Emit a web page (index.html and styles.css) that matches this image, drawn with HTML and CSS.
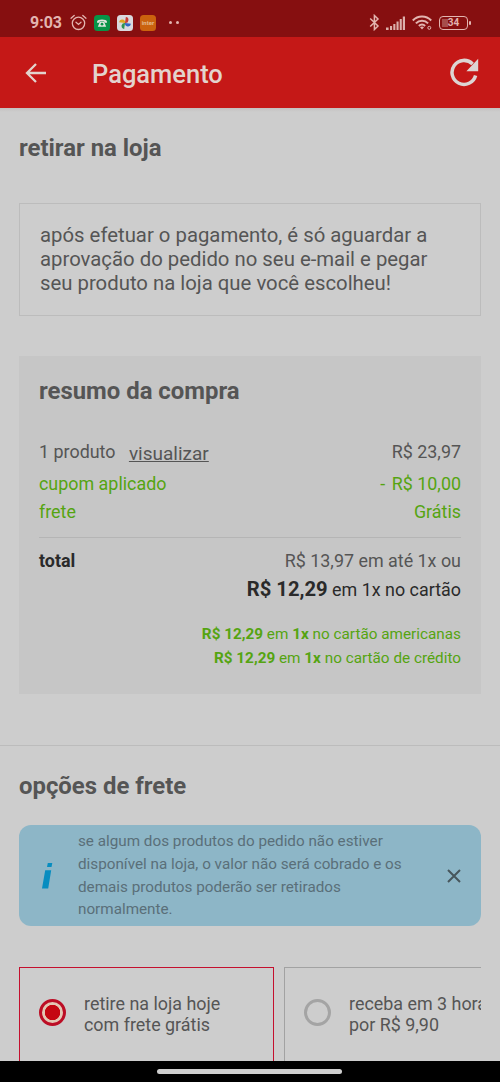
FILE: index.html
```
<!DOCTYPE html>
<html lang="pt-BR">
<head>
<meta charset="utf-8">
<title>Pagamento</title>
<link rel="stylesheet" href="styles.css">
</head>
<body>
<div class="screen">
  <div class="statusbar">
    <span class="clock">9:03</span>
    <svg class="alarm" width="17" height="17" viewBox="0 0 17 17" fill="none" stroke="#e3b5b0" stroke-width="1.3" stroke-linecap="round"><circle cx="8.5" cy="9.3" r="6.2"/><path d="M1 4.2 4.2 1.5M16 4.2 12.8 1.5M6 8.3l2.5 2.2L11 8.3"/></svg>
    <svg class="app" width="16" height="16" viewBox="0 0 16 16"><rect width="16" height="16" rx="3.5" fill="#079447"/><path d="M3 6.8C3 3.7 13 3.7 13 6.8L12.6 8 10.3 7.6V6.4H5.7v1.2L3.4 8z" fill="#dfe6df"/><path d="M5.8 7h4.4l2 4.7H3.8z" fill="#dfe6df"/><circle cx="8" cy="9.2" r="1.4" fill="#079447"/></svg>
    <svg class="app" width="16" height="16" viewBox="0 0 16 16"><rect width="16" height="16" rx="3.5" fill="#d9d9de"/><path d="M8 8V2a3 3 0 0 1 0 6z" fill="#c83c32" transform="rotate(8 8 8)"/><path d="M8 8h6A3 3 0 0 1 8 8z" fill="#2f66c4" transform="rotate(8 8 8)"/><path d="M8 8v6A3 3 0 0 1 8 8z" fill="#2d9250" transform="rotate(8 8 8)"/><path d="M8 8H2A3 3 0 0 1 8 8z" fill="#dfa51d" transform="rotate(8 8 8)"/></svg>
    <span class="inter">inter</span>
    <span class="dots"><i></i><i></i></span>
    <svg class="bluetooth" width="11" height="17" viewBox="0 0 11 17" fill="none" stroke="#e3b5b0" stroke-width="1.5"><path d="M1.2 4.5 9 12l-3.6 3.5V1.5L9 5l-7.8 7.5"/></svg>
    <svg class="signal" width="19" height="14" viewBox="0 0 19 14" fill="#dcb0ab"><path d="M0 11.5h2.6V14H0zM4 10h2.1v4H4zM7.3 8h2.1v6H7.3zM10.5 5.6h2.1V14h-2.1zM13.7 3h2.1v11h-2.1zM16.8 0.5H19V14h-2.2z"/></svg>
    <svg class="wifi" width="20" height="15" viewBox="0 0 20 15" fill="none" stroke="#e3b5b0" stroke-width="2"><path d="M.8 5.5C5.8.2 14.2.2 19.2 5.5M3.9 8.4c3.3-3.6 8.9-3.6 12.2 0M6.9 11c1.8-1.9 4.4-1.9 6.2 0"/><path d="M8 12.3Q10 10.5 12 12.3L10 14.6z" fill="#e3b5b0" stroke="none"/><circle cx="17.3" cy="12.8" r="1.5" stroke-width="1"/></svg>
    <span class="battery"><b>34</b></span>
  </div>
  <header class="appbar">
    <svg class="back" width="22" height="20" viewBox="0 0 22 20" fill="none" stroke="#e3d3cd" stroke-width="2.3"><path d="M21 10H2M11 1 2 10l9 9"/></svg>
    <h1>Pagamento</h1>
    <svg class="reload" width="29" height="29" viewBox="0 0 29 29"><path d="M25.6 17.5A12 12 0 1 1 22.6 6" fill="none" stroke="#ddd5d3" stroke-width="3.5"/><path d="M28.2.8v12.5H16.4z" fill="#ddd5d3"/></svg>
  </header>
  <main class="content">
    <section class="pickup">
      <h2>retirar na loja</h2>
      <p class="notice">após efetuar o pagamento, é só aguardar a<br>aprovação do pedido no seu e-mail e pegar<br>seu produto na loja que você escolheu!</p>
      <div class="summary">
        <h2>resumo da compra</h2>
        <div class="row products"><span>1 produto <a>visualizar</a></span><span>R$ 23,97</span></div>
        <div class="row coupon"><span>cupom aplicado</span><span><span class="minus">-</span> R$ 10,00</span></div>
        <div class="row freight"><span>frete</span><span>Grátis</span></div>
        <div class="row total"><strong>total</strong><span>R$ 13,97 em até 1x ou</span></div>
        <div class="cash"><strong>R$ 12,29</strong> em 1x no cartão</div>
        <div class="offers">
          <div><b>R$ 12,29</b> em <b>1x</b> no cartão americanas</div>
          <div><b>R$ 12,29</b> em <b>1x</b> no cartão de crédito</div>
        </div>
      </div>
    </section>
    <section class="shipping">
      <h2>opções de frete</h2>
      <div class="info">
        <svg class="info-icon" width="11" height="26" viewBox="0 0 11 26" fill="#078dc0"><path d="M5.8 0h4.5l-.8 4.1H5zM3.2 7.3h6L6.2 25.5H0z"/></svg>
        <p>se algum dos produtos do pedido não estiver<br>disponível na loja, o valor não será cobrado e os<br>demais produtos poderão ser retirados<br>normalmente.</p>
        <svg class="close" width="14" height="14" viewBox="0 0 14 14" stroke="#47565c" stroke-width="2"><path d="M1 1l12 12M13 1 1 13"/></svg>
      </div>
      <div class="options">
        <div class="option selected"><span class="radio"></span><span>retire na loja hoje<br>com frete grátis</span></div>
        <div class="option"><span class="radio"></span><span>receba em 3 horas<br>por R$ 9,90</span></div>
      </div>
    </section>
  </main>
  <div class="navbar"><span></span></div>
</div>
</body>
</html>
```
FILE: styles.css
```
* { box-sizing: border-box; }
body { margin: 0; background: #cdcdcd; font-family: Roboto, sans-serif; color: #555; }
h1, h2, p { margin: 0; }
.screen { width: 500px; height: 1082px; display: flex; flex-direction: column; overflow: hidden; }
.statusbar { flex: 0 0 37px; display: flex; align-items: center; padding: 8px 29px 0 30px; background: #860f10; color: #e3b5b0; }
.clock { width: 40px; font-size: 16px; font-weight: 700; line-height: 18px; }
.app { margin-left: 7px; }
.inter { width: 16px; height: 16px; margin-left: 7px; border-radius: 3.5px; background: #cb620e; color: #e2b98c; font-size: 6px; font-weight: 700; line-height: 15px; text-align: center; }
.dots { display: flex; gap: 4px; margin-left: 13px; }
.dots i { width: 3px; height: 3px; border-radius: 50%; background: #e3b5b0; }
.bluetooth { margin-left: auto; }
.signal { margin-left: 6px; }
.wifi { margin-left: 7px; }
.battery { position: relative; width: 29px; height: 14px; margin: 0 3px 0 7px; border: 1px solid #e3b5b0; border-radius: 4px; background: linear-gradient(#a64d4b, #a64d4b) 2px 2px / 6px 8px no-repeat; font-size: 10px; line-height: 12px; text-align: center; }
.battery b { font-weight: 700; }
.battery::after { content: ""; position: absolute; right: -4px; top: 4px; width: 2px; height: 4px; border-radius: 1px; background: #e3b5b0; }
.appbar { flex: 0 0 71px; display: flex; align-items: center; padding: 0 21px 0 25px; background: #c51817; color: #e3d3cd; }
.appbar h1 { margin-left: 45px; padding-top: 3px; font-size: 25.5px; font-weight: 500; line-height: 30px; }
.reload { margin-left: auto; }
.content { flex: 0 0 953px; overflow: hidden; background: linear-gradient(#c4c1c0, #cdcdcd 4px); }
h2 { font-size: 23.9px; font-weight: 700; line-height: 28px; }
.pickup { height: 638px; padding: 26px 19px 0; border-bottom: 1px solid #bcbcbc; }
.notice { height: 113px; margin-top: 41px; padding: 19px 19px 0 20px; border: 1px solid #bcbcbc; font-size: 20.33px; line-height: 24px; white-space: nowrap; }
.summary { height: 338px; margin-top: 40px; padding: 21px 20px 0; background: #c6c6c6; font-size: 17.9px; }
.row { display: flex; justify-content: space-between; }
.products { height: 34px; margin-top: 35px; line-height: 24px; }
.products a { position: relative; top: 2px; margin-left: 9px; font-size: 19px; text-decoration: underline; }
.coupon, .freight { height: 28px; line-height: 24px; color: #55a411; }
.coupon { margin-top: -2px; margin-bottom: 2px; }
.minus { margin-right: 2px; }
.freight { height: 38px; margin-top: -2px; border-bottom: 1px solid #b5b5b5; }
.total { margin-top: 11px; line-height: 24px; }
.total strong { color: #2a2a2a; }
.cash { margin-top: 4px; line-height: 25px; text-align: right; color: #2a2a2a; }
.cash strong { font-size: 20.2px; }
.offers { margin-top: 20px; color: #55a411; font-size: 15.3px; line-height: 24px; text-align: right; }
.shipping { padding: 26px 19px 0; }
.info { height: 101px; margin-top: 25px; padding: 0 20px 0 23px; display: flex; align-items: center; border-radius: 12px; background: #8db6c7; }
.info p { margin-left: 25px; color: #5a6f79; font-size: 15.25px; line-height: 22.7px; white-space: nowrap; }
.close { margin-left: auto; }
.options { height: 110px; margin-top: 41px; display: flex; gap: 10px; overflow: hidden; }
.option { flex: 0 0 255px; display: flex; padding: 25px 0 0 19px; border: 1px solid #a2a2a2; font-size: 17.9px; line-height: 21px; white-space: nowrap; }
.option.selected { border: 1px solid #c4102e; }
.radio { width: 27px; height: 27px; margin: 6px 18px 0 0; border: 3px solid #a4a4a4; border-radius: 50%; }
.selected .radio { border-color: #bc0d25; background: radial-gradient(circle, #c50712 7.4px, #e3c6b4 8px); }
.navbar { flex: 0 0 21px; padding-top: 8px; background: #000; }
.navbar span { display: block; width: 185px; height: 5px; margin-left: 157px; border-radius: 3px; background: #cecece; }
```
